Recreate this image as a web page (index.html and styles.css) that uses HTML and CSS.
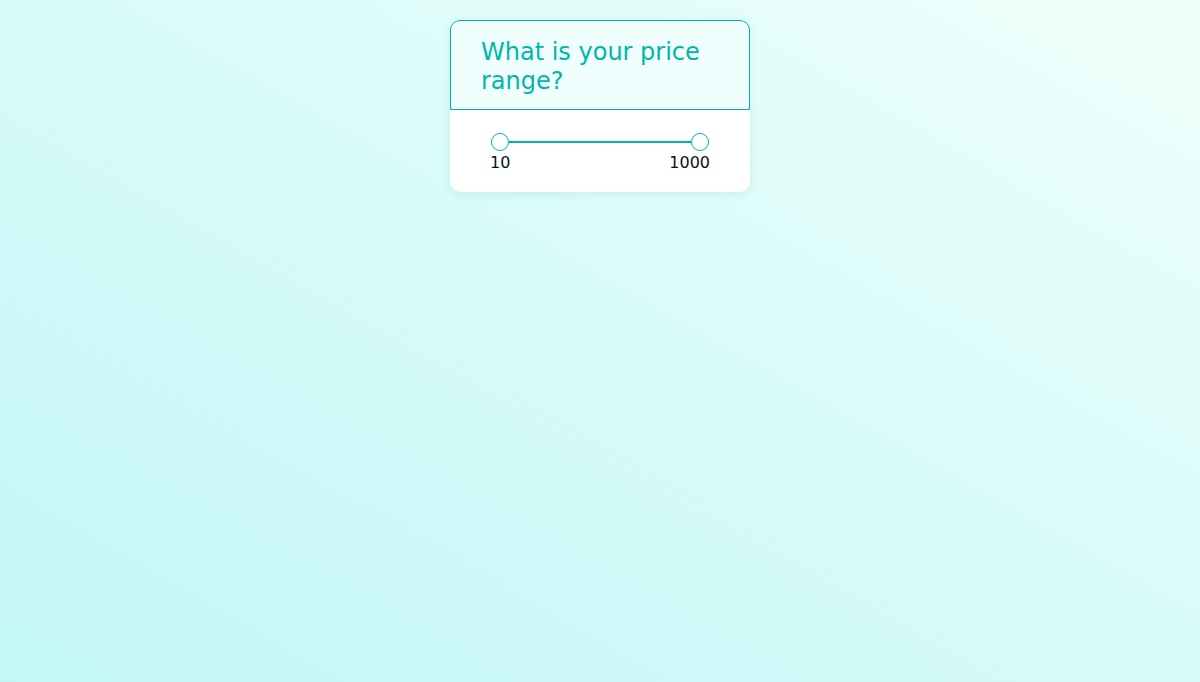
FILE: index.html
```html
<!DOCTYPE html>
<html>
<head>
<meta charset="utf-8">
<link rel="stylesheet" href="styles.css">
</head>
<body>
<div class="card">
  <div class="card-header">
    <h1 class="title">What is your price range?</h1>
  </div>
  <div class="card-body">
    <div class="slider">
      <span class="thumb"></span>
      <span class="track"></span>
      <span class="thumb"></span>
    </div>
    <div class="labels">
      <span class="label">10</span>
      <span class="label">1000</span>
    </div>
  </div>
</div>
</body>
</html>
```
FILE: styles.css
```css
html, body {
  margin: 0;
  height: 100%;
}
body {
  background: linear-gradient(to top right, #c4f6f8 0%, #d6fbf9 50%, #f0fffb 100%);
  font-family: "DejaVu Sans", Verdana, sans-serif;
  padding-top: 20px;
  box-sizing: border-box;
}
.card {
  width: 300px;
  margin: 0 auto;
  border-radius: 10px;
  background: #ffffff;
  box-shadow: 0 2px 8px rgba(0, 150, 150, 0.12);
}
.card-header {
  background: #f0fffd;
  border: 1px solid #00b2ad;
  border-radius: 10px 10px 0 0;
  padding: 17px 30px 13px 30px;
}
.title {
  margin: 0;
  font-size: 24px;
  font-weight: normal;
  line-height: 29px;
  color: #00b5ad;
}
.card-body {
  padding: 22px 40px 19px 40px;
  border-radius: 0 0 10px 10px;
}
.slider {
  display: flex;
  align-items: center;
  height: 19px;
  padding: 0 1px;
}
.thumb {
  width: 16px;
  height: 16px;
  border: 1px solid #00b5ad;
  border-radius: 50%;
  background: #ffffff;
  flex: none;
}
.track {
  flex: 1;
  height: 2px;
  background: #00b5ad;
}
.labels {
  display: flex;
  justify-content: space-between;
  font-family: "DejaVu Sans", Verdana, sans-serif;
  font-size: 16px;
  line-height: 20px;
  color: #111;
  margin-top: 2px;
}
```
